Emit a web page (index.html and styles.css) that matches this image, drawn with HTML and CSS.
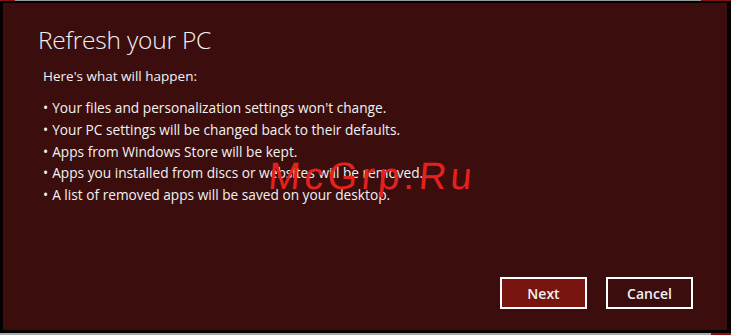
FILE: index.html
```html
<!DOCTYPE html>
<html>
<head>
<meta charset="utf-8">
<link rel="stylesheet" href="styles.css">
</head>
<body>
<div class="screen">
  <div class="topline"><span class="corner-l"></span><span class="corner-r"></span></div>
  <div class="dialog">
    <h1 class="title">Refresh your PC</h1>
    <p class="intro">Here's what will happen:</p>
    <ul class="list">
      <li>Your files and personalization settings won't change.</li>
      <li>Your PC settings will be changed back to their defaults.</li>
      <li>Apps from Windows Store will be kept.</li>
      <li>Apps you installed from discs or websites will be removed.</li>
      <li>A list of removed apps will be saved on your desktop.</li>
    </ul>
    <div class="actions">
      <button class="btn btn-primary">Next</button>
      <button class="btn">Cancel</button>
    </div>
    <div class="watermark">McGrp.Ru</div>
  </div>
  <div class="bottomline"><span class="corner-l"></span><span class="corner-r"></span></div>
</div>
</body>
</html>
```
FILE: styles.css
```css
html, body {
  margin: 0;
  padding: 0;
  background: #3b0d0d;
}
.screen {
  width: 731px;
  height: 335px;
  display: flex;
  flex-direction: column;
  overflow: hidden;
  font-family: "Open Sans", "Noto Sans", sans-serif;
  color: #f2f2f2;
}
.topline, .bottomline {
  height: 1px;
  background: #9a9a9a;
  display: flex;
  justify-content: space-between;
  flex: none;
}
.bottomline { height: 2px; background: #a8a8a8; }
.corner-l { width: 15px; background: #8a1010; }
.corner-r { width: 30px; background: #8a1010; }
.bottomline .corner-l { width: 0; }
.bottomline .corner-r { width: 20px; }
.dialog {
  position: relative;
  flex: 1;
  background: #3b0d0d;
  border-style: solid;
  border-color: #050000;
  border-width: 2px 4px 3px 3px;
  padding: 0 0 0 35px;
  display: flex;
  flex-direction: column;
}
.title {
  margin: 21px 0 0 0;
  font-size: 24.5px;
  font-weight: 300;
  line-height: 32px;
  letter-spacing: -0.2px;
}
.intro {
  margin: 11px 0 0 5px;
  font-size: 13.5px;
  line-height: 18px;
}
.list {
  list-style: none;
  margin: 12px 0 0 5px;
  padding: 0;
  font-size: 13.7px;
  line-height: 21.8px;
}
.list li::before {
  content: "\2022";
  margin-right: 4px;
}
.actions {
  margin-top: auto;
  margin-bottom: 21px;
  margin-right: 34px;
  display: flex;
  justify-content: flex-end;
  gap: 19px;
}
.btn {
  width: 87px;
  height: 32px;
  border: 2px solid #ffffff;
  background: #3b0d0d;
  color: #f2f2f2;
  font-family: "Open Sans", "Noto Sans", sans-serif;
  font-size: 14px;
  font-weight: 600;
  padding: 0;
}
.btn-primary { background: #781511; }
.watermark {
  position: absolute;
  left: 264px;
  top: 154px;
  font-family: "Liberation Sans", Arial, sans-serif;
  font-size: 38px;
  color: #e4211f;
  letter-spacing: 4.3px;
  line-height: 38px;
  transform: skewX(-5deg);
  transform-origin: left bottom;
}
```
